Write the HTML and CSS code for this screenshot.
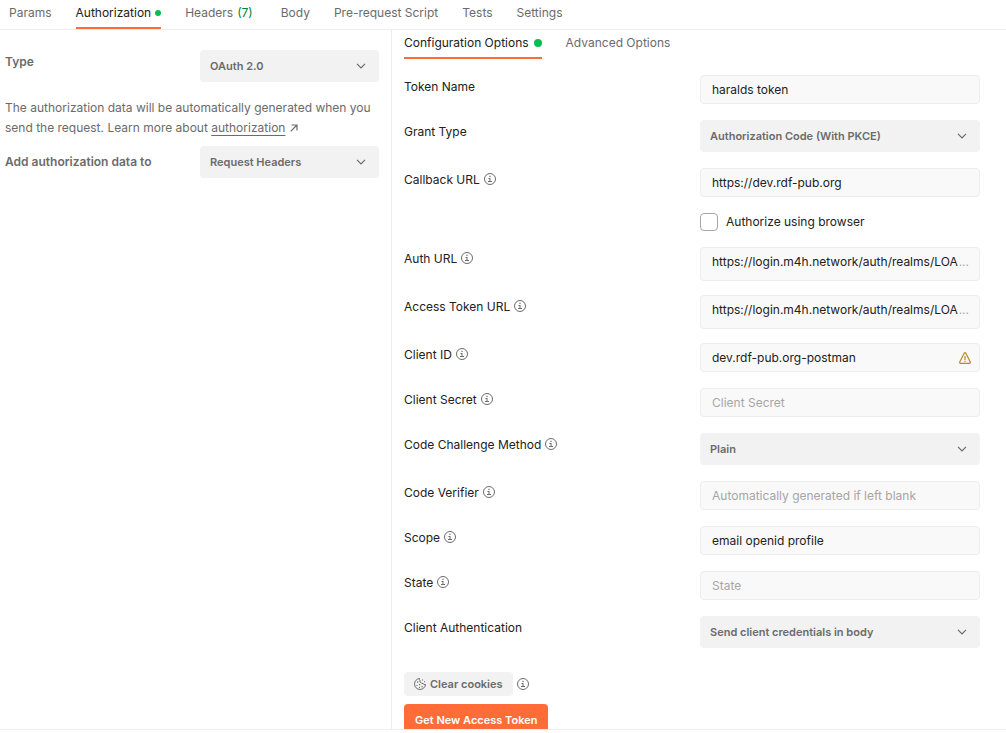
FILE: index.html
```html
<!DOCTYPE html>
<html lang="en">
<head>
<meta charset="utf-8">
<meta name="viewport" content="width=device-width, initial-scale=1">
<title>Authorization</title>
<link rel="stylesheet" href="styles.css">
</head>
<body>
<svg class="sprite" aria-hidden="true">
  <symbol id="info" viewBox="0 0 12 12">
    <circle cx="6" cy="6" r="5.5" fill="none" stroke="currentColor"/>
    <path d="M5.4 2.7h1.2v1.2H5.4zM4.5 5h2v3H8v1H4V8h1.5V6h-1z" fill="currentColor"/>
  </symbol>
  <symbol id="chevron" viewBox="0 0 10 6">
    <path d="M1 .8l4 4 4-4" fill="none" stroke="currentColor" stroke-width="1.2"/>
  </symbol>
</svg>
<div class="app">
  <nav class="tabs tabs-request" aria-label="Request">
    <button class="tab" type="button">Params</button>
    <button class="tab tab-active" type="button">Authorization<span class="dot dot-small"></span></button>
    <button class="tab tab-counted" type="button">Headers <span class="count">(7)</span></button>
    <button class="tab" type="button">Body</button>
    <button class="tab" type="button">Pre-request Script</button>
    <button class="tab" type="button">Tests</button>
    <button class="tab" type="button">Settings</button>
  </nav>
  <main class="panels">
    <section class="side">
      <div class="side-row">
        <label class="side-label" for="type">Type</label>
        <div class="select"><select id="type"><option>OAuth 2.0</option></select><svg class="chevron"><use href="#chevron"/></svg></div>
      </div>
      <p class="note">The authorization data will be automatically generated when you send the request. Learn more about <a class="link" href="#authorization">authorization</a>
        <svg class="arrow" viewBox="0 0 8 8"><path d="M.7 7.3L7 1M1.5 1H7v5.5" fill="none" stroke="currentColor" stroke-width="1.2"/></svg></p>
      <div class="side-row side-row-center">
        <label class="side-label" for="target">Add authorization data to</label>
        <div class="select"><select id="target"><option>Request Headers</option></select><svg class="chevron"><use href="#chevron"/></svg></div>
      </div>
    </section>
    <section class="config">
      <nav class="tabs" aria-label="Token configuration">
        <button class="tab tab-active" type="button">Configuration Options<span class="dot"></span></button>
        <button class="tab" type="button">Advanced Options</button>
      </nav>
      <form class="form">
        <div class="row">
          <label class="label" for="name">Token Name</label>
          <div class="field"><input id="name" type="text" value="haralds token"></div>
        </div>
        <div class="row">
          <label class="label" for="grant">Grant Type</label>
          <div class="select"><select id="grant"><option>Authorization Code (With PKCE)</option></select><svg class="chevron"><use href="#chevron"/></svg></div>
        </div>
        <div class="row">
          <label class="label" for="callback">Callback URL <svg class="info"><use href="#info"/></svg></label>
          <div class="field"><input id="callback" type="text" value="https://dev.rdf-pub.org"></div>
        </div>
        <div class="row">
          <label class="check"><input type="checkbox">Authorize using browser</label>
        </div>
        <div class="row">
          <label class="label" for="auth-url">Auth URL <svg class="info"><use href="#info"/></svg></label>
          <div class="field field-tall"><input id="auth-url" type="text" value="https://login.m4h.network/auth/realms/LOA"><span class="more">...</span></div>
        </div>
        <div class="row">
          <label class="label" for="token-url">Access Token URL <svg class="info"><use href="#info"/></svg></label>
          <div class="field field-tall"><input id="token-url" type="text" value="https://login.m4h.network/auth/realms/LOA"><span class="more">...</span></div>
        </div>
        <div class="row">
          <label class="label" for="client-id">Client ID <svg class="info"><use href="#info"/></svg></label>
          <div class="field"><input id="client-id" type="text" value="dev.rdf-pub.org-postman">
            <svg class="warning" viewBox="0 0 12 12"><path d="M5.2 1.2q.8-1 1.600 0l4.500 8.800q.2 1.300-.8 1.400h-9Q.5 11.300.7 10z" fill="none" stroke="currentColor" stroke-width="1.200" stroke-linejoin="round"/><path d="M5.400 4h1.200v4H5.400zM5.400 8.700h1.200v1.200H5.400z" fill="currentColor"/></svg></div>
        </div>
        <div class="row">
          <label class="label" for="secret">Client Secret <svg class="info"><use href="#info"/></svg></label>
          <div class="field"><input id="secret" type="text" placeholder="Client Secret"></div>
        </div>
        <div class="row">
          <label class="label" for="method">Code Challenge Method <svg class="info"><use href="#info"/></svg></label>
          <div class="select"><select id="method"><option>Plain</option></select><svg class="chevron"><use href="#chevron"/></svg></div>
        </div>
        <div class="row">
          <label class="label" for="verifier">Code Verifier <svg class="info"><use href="#info"/></svg></label>
          <div class="field"><input id="verifier" type="text" placeholder="Automatically generated if left blank"></div>
        </div>
        <div class="row">
          <label class="label" for="scope">Scope <svg class="info"><use href="#info"/></svg></label>
          <div class="field"><input id="scope" type="text" value="email openid profile"></div>
        </div>
        <div class="row">
          <label class="label" for="state">State <svg class="info"><use href="#info"/></svg></label>
          <div class="field"><input id="state" type="text" placeholder="State"></div>
        </div>
        <div class="row">
          <label class="label" for="client-auth">Client Authentication</label>
          <div class="select"><select id="client-auth"><option>Send client credentials in body</option></select><svg class="chevron"><use href="#chevron"/></svg></div>
        </div>
      </form>
      <div class="actions">
        <div class="cookies">
          <button class="button button-quiet" type="button"><svg class="cookie" viewBox="0 0 12 12"><path d="M5.500.5A5.500 5.500 0 1 0 11.500 6.500Q10 7 9 5.500 7.500 6 7 4.500 5 4 6 2.500 5 1.500 5.500.5z" fill="none" stroke="currentColor"/><path d="M8 1.500h1v1H8zM10 3.300h1v1h-1zM3 3.500h1.200v1.200H3zM2.500 7h1v1h-1zM5 6h1.200v1.200H5zM5 9h1v1H5zM7.500 8h1.200v1.200H7.500z" fill="currentColor"/></svg>Clear cookies</button>
          <svg class="info"><use href="#info"/></svg>
        </div>
        <button class="button button-primary" type="button">Get New Access Token</button>
      </div>
    </section>
  </main>
</div>
</body>
</html>
```

FILE: styles.css
```css
* {
  box-sizing: border-box;
}

body {
  margin: 0;
  background: #fff;
  color: #212121;
  font: 12px/20px Inter, sans-serif;
}

button,
input,
select {
  margin: 0;
  font: inherit;
  color: inherit;
}

svg {
  flex: none;
}

.sprite {
  display: none;
}

.app {
  display: flex;
  flex-direction: column;
  height: 100vh;
  padding-bottom: 3px;
}

.tabs {
  display: flex;
  gap: 24px;
}

.tabs-request {
  flex: none;
  padding: 0 9px;
  border-bottom: 1px solid #ededed;
}

.tab {
  display: flex;
  align-items: center;
  gap: 5px;
  padding: 3px 0 4px;
  border: 0;
  border-bottom: 2px solid transparent;
  background: none;
  color: #6b6b6b;
  white-space: nowrap;
}

.tab-active {
  border-color: #ff6c37;
  color: #212121;
}

.tab-counted {
  gap: 4px;
  padding-right: 4px;
}

.dot {
  width: 8px;
  height: 8px;
  border-radius: 50%;
  background: #0cbb52;
}

.dot-small {
  width: 6px;
  height: 6px;
  margin-left: -1px;
}

.count {
  color: #007f31;
}

.panels {
  display: grid;
  flex: 1;
  grid-template-columns: 392px minmax(0, 1fr);
  min-height: 0;
  overflow: hidden;
  border-bottom: 1px solid #ededed;
}

.side {
  padding: 20px 12px 0 5px;
  border-right: 1px solid #ededed;
  color: #6b6b6b;
}

.side-row {
  display: grid;
  grid-template-columns: 195px minmax(0, 1fr);
}

.side-row-center {
  align-items: center;
}

.side-label {
  padding: 2px 0;
  font-weight: 600;
}

.note {
  margin: 16px 0 8px;
}

.link {
  color: inherit;
  text-decoration: underline 1px;
  text-decoration-skip-ink: none;
  text-underline-offset: 3px;
}

.arrow {
  width: 8px;
  height: 8px;
  margin-left: 1px;
}

.select {
  position: relative;
}

.select select {
  display: block;
  width: 100%;
  height: 32px;
  padding: 0 32px 0 10px;
  border: 0;
  border-radius: 4px;
  appearance: none;
  background: #f2f2f2;
  color: #6b6b6b;
  font-size: 11px;
  font-weight: 600;
}

.chevron {
  position: absolute;
  top: 13px;
  right: 13px;
  width: 10px;
  height: 6px;
  color: #6b6b6b;
  pointer-events: none;
}

.config {
  padding: 0 26px 0 12px;
}

.form {
  display: grid;
  gap: 16px;
  padding: 16px 0 24px;
}

.row {
  display: grid;
  grid-template-columns: minmax(0, 1fr) 280px;
  align-items: start;
}

.label {
  display: flex;
  align-items: center;
  gap: 4px;
  height: 20px;
  margin-top: 2px;
}

.info {
  width: 12px;
  height: 12px;
  color: #6b6b6b;
}

.label .info {
  margin-bottom: 2px;
}

.field {
  display: flex;
  align-items: center;
  height: 29px;
  padding: 0 8px 0 11px;
  border: 1px solid #ededed;
  border-radius: 4px;
  background: #f9f9f9;
}

.field input {
  flex: 1;
  min-width: 0;
  height: 20px;
  padding: 0;
  border: 0;
  outline: 0;
  background: none;
}

.field input::placeholder {
  color: #a6a6a6;
}

.field-tall {
  align-items: flex-start;
  height: 34px;
  margin-bottom: -2px;
  padding-top: 4px;
  padding-right: 10px;
}

.more {
  color: #a6a6a6;
}

.warning {
  width: 12px;
  height: 12px;
  color: #b88a1d;
}

.check {
  display: flex;
  grid-column: 2;
  align-items: center;
  gap: 8px;
  height: 18px;
  line-height: 22px;
}

.check input {
  width: 18px;
  height: 18px;
  border: 1px solid #a6a6a6;
  border-radius: 4px;
  appearance: none;
  background: #fff;
}

.actions {
  display: grid;
  justify-items: start;
  gap: 8px;
}

.cookies {
  display: flex;
  align-items: center;
  gap: 4px;
}

.button {
  display: flex;
  align-items: center;
  gap: 4px;
  padding: 0 10px;
  border: 0;
  border-radius: 4px;
  font-size: 11px;
  font-weight: 600;
}

.button-quiet {
  height: 24px;
  background: #f2f2f2;
  color: #6b6b6b;
}

.button-primary {
  height: 32px;
  padding: 0 11px;
  background: #ff6c37;
  color: #fff;
}

.cookie {
  width: 12px;
  height: 12px;
}
```
